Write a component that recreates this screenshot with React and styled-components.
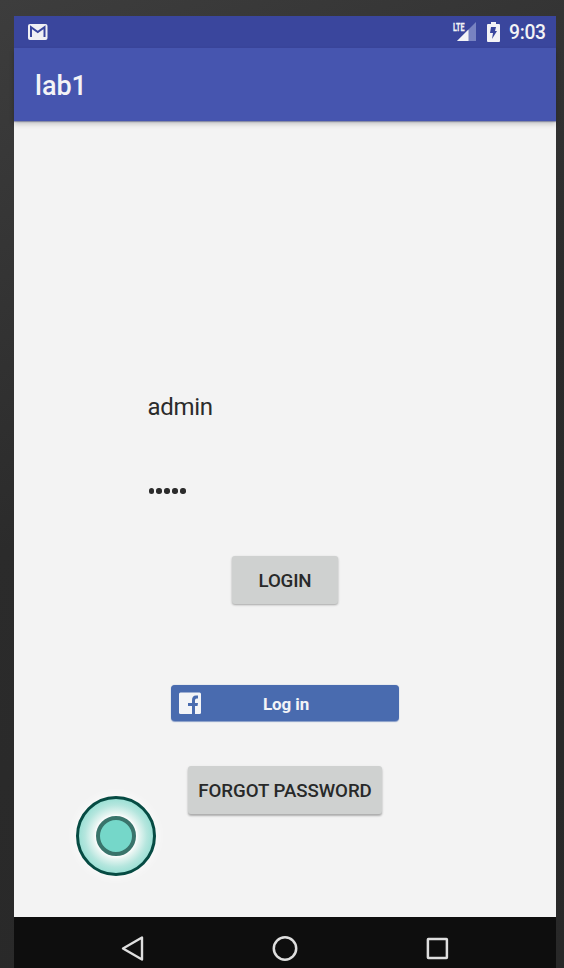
import React from 'react';
import styled, { createGlobalStyle } from 'styled-components';

const GlobalStyle = createGlobalStyle`
  * { box-sizing: border-box; }
  body { margin: 0; background: #2a2a2a; font-family: Roboto, "Liberation Sans", sans-serif; }
`;

const Desktop = styled.div`
  height: 968px;
  padding: 16px 8px 0 14px;
  overflow: hidden;
  background: linear-gradient(155deg, #3d3d3d 0%, #2b2b2b 45%, #282828 100%);
`;

const Phone = styled.div`
  position: relative;
  display: flex;
  flex-direction: column;
  height: 952px;
  background: #f3f3f3;
`;

const StatusBar = styled.header`
  display: flex;
  align-items: center;
  justify-content: space-between;
  height: 32px;
  flex: none;
  padding: 0 9px 0 14px;
  background: #3a469d;
  color: #f3f3f6;
`;

const StatusIcons = styled.div`
  display: flex;
  align-items: center;
`;

const Signal = styled.div`
  display: flex;
  width: 24px;
  height: 20px;
  margin-right: 10px;
`;

const NetworkLabel = styled.span`
  width: 13px;
  font-size: 11.5px;
  font-weight: 700;
  line-height: 10px;
  transform: scaleX(0.62);
  transform-origin: left top;
  -webkit-text-stroke: 0.3px #f3f3f6;
`;

const SignalIcon = styled.svg`
  flex: none;
  margin: 0 0 0 -9px;
`;

const Clock = styled.span`
  margin-left: 9px;
  width: 38px;
  font-size: 19.3px;
  line-height: 32px;
  padding-top: 1px;
  font-weight: 500;
  letter-spacing: -0.3px;
`;

const AppBar = styled.div`
  display: flex;
  align-items: center;
  height: 73px;
  flex: none;
  padding: 2px 21px 0;
  background: #4655af;
  box-shadow: 0 1px 1px rgba(40, 50, 110, 0.4), 0 3px 5px rgba(0, 0, 0, 0.2);
`;

const Title = styled.h1`
  margin: 0;
  color: #f3f3f6;
  font-size: 27px;
  font-weight: 500;
`;

const Form = styled.main`
  display: flex;
  flex-direction: column;
  align-items: center;
  flex: 1;
  padding-top: 270px;
`;

const Field = styled.div`
  display: flex;
  align-items: center;
  width: 275px;
  height: 32px;
  color: #2b2b2b;
  font-size: 24px;
  letter-spacing: -0.3px;
`;

const PasswordField = styled(Field)`
  gap: 2.7px;
  margin: 52px 0 49px;
  padding-left: 1px;
`;

const Dot = styled.span`
  width: 5.3px;
  height: 5.3px;
  border-radius: 50%;
  background: #2b2b2b;
`;

const Button = styled.button`
  width: ${(p) => p.$width}px;
  height: 48px;
  flex: none;
  padding: 2px 0 0;
  border: 0;
  border-radius: 3px;
  background: #cfd1d0;
  color: #282929;
  font: 500 18.7px Roboto, "Liberation Sans", sans-serif;
  letter-spacing: ${(p) => p.$tracking}px;
  white-space: nowrap;
  box-shadow: 0 ${(p) => p.$lift}px 2px rgba(0, 0, 0, 0.24), 0 1px 3px rgba(0, 0, 0, 0.1);
`;

const FacebookButton = styled.button`
  display: flex;
  align-items: center;
  width: 228px;
  height: 36px;
  flex: none;
  margin: 81px 0 45px;
  padding: 0 8px;
  border: 0;
  border-radius: 4px;
  background: #496baf;
  color: #f3f4f7;
  font: 700 17px Roboto, "Liberation Sans", sans-serif;
  letter-spacing: -0.1px;
  box-shadow: 0 0.5px 1px rgba(73, 107, 175, 0.65);
`;

const FacebookLabel = styled.span`
  flex: 1;
  margin-right: 20px;
  padding-top: 2px;
  text-align: center;
`;

const NavBar = styled.nav`
  display: flex;
  align-items: flex-start;
  justify-content: center;
  gap: 124px;
  height: 51px;
  flex: none;
  padding-top: 17px;
  background: #0e0e0e;
`;

const TouchPointer = styled.div`
  position: absolute;
  left: 62px;
  top: 780px;
  display: flex;
  align-items: center;
  justify-content: center;
  width: 80px;
  height: 80px;
  border: 3px solid #064b43;
  border-radius: 50%;
  background: radial-gradient(circle, #f3f8f7 0 20px, #e0f3ef 24px, #b5e6de 31px, #99dfd4 38px);
  box-shadow: 0 0 9px 3px rgba(255, 255, 255, 0.5);
`;

const TouchCore = styled.div`
  width: 40px;
  height: 40px;
  border: 4px solid #39746b;
  border-radius: 50%;
  background: #75d7c9;
  box-shadow: 0 0 3px 1px #fff;
`;

export default function App() {
  return (
    <>
      <GlobalStyle />
      <Desktop>
        <Phone>
          <StatusBar>
            <svg width="20" height="16" viewBox="0 0 20 16">
              <rect width="19.5" height="16" rx="2" fill="#f0f0f4" />
              <path d="M3 13V3.2L9.75 8 16.5 3.2V13" fill="none" stroke="#3a469d" strokeWidth="2" />
            </svg>
            <StatusIcons>
              <Signal>
                <NetworkLabel>LTE</NetworkLabel>
                <SignalIcon width="19" height="19" viewBox="0 0 19 19">
                  <path d="M0 19 19 0V19Z" fill="#7883c1" />
                  <path d="M0 19 11.5 7.5V19Z" fill="#f3f3f6" />
                </SignalIcon>
              </Signal>
              <svg width="13" height="20" viewBox="0 0 13 20">
                <path d="M4 0h5v2h3q1 0 1 1v16q0 1-1 1H1q-1 0-1-1V3q0-1 1-1h3Z" fill="#f3f3f6" />
                <path d="M4 5h5L8 9h2L5 17l1-6H3Z" fill="#3a469d" />
              </svg>
              <Clock>9:03</Clock>
            </StatusIcons>
          </StatusBar>
          <AppBar><Title>lab1</Title></AppBar>
          <Form>
            <Field>admin</Field>
            <PasswordField aria-label="Password">
              <Dot /><Dot /><Dot /><Dot /><Dot />
            </PasswordField>
            <Button $width={106} $lift={1} $tracking={-0.15}>LOGIN</Button>
            <FacebookButton>
              <svg width="22" height="22" viewBox="0 0 22 22">
                <rect y="0.5" width="22" height="21.5" rx="1.5" fill="#f3f4f7" />
                <path d="M13 22V14H9V11H13V8.5Q13 3.5 17 3.5H19V6.5H17.7Q16 6.5 16 8.3V11H19L18.5 14H16V22Z" fill="#496baf" />
              </svg>
              <FacebookLabel>Log in</FacebookLabel>
            </FacebookButton>
            <Button $width={194} $lift={2} $tracking={-0.07}>FORGOT PASSWORD</Button>
          </Form>
          <NavBar>
            <svg width="28" height="28" viewBox="0 0 28 28" fill="none" stroke="#dedede" strokeWidth="2.4">
              <path d="M4 14.5 23 3.5V25.5Z" strokeLinejoin="round" />
            </svg>
            <svg width="28" height="28" viewBox="0 0 28 28" fill="none" stroke="#dedede" strokeWidth="2.5">
              <circle cx="14" cy="14.5" r="11.2" />
            </svg>
            <svg width="28" height="28" viewBox="0 0 28 28" fill="none" stroke="#dedede" strokeWidth="2.5">
              <rect x="4.9" y="4.9" width="19" height="19" rx="0.5" />
            </svg>
          </NavBar>
          <TouchPointer><TouchCore /></TouchPointer>
        </Phone>
      </Desktop>
    </>
  );
}
